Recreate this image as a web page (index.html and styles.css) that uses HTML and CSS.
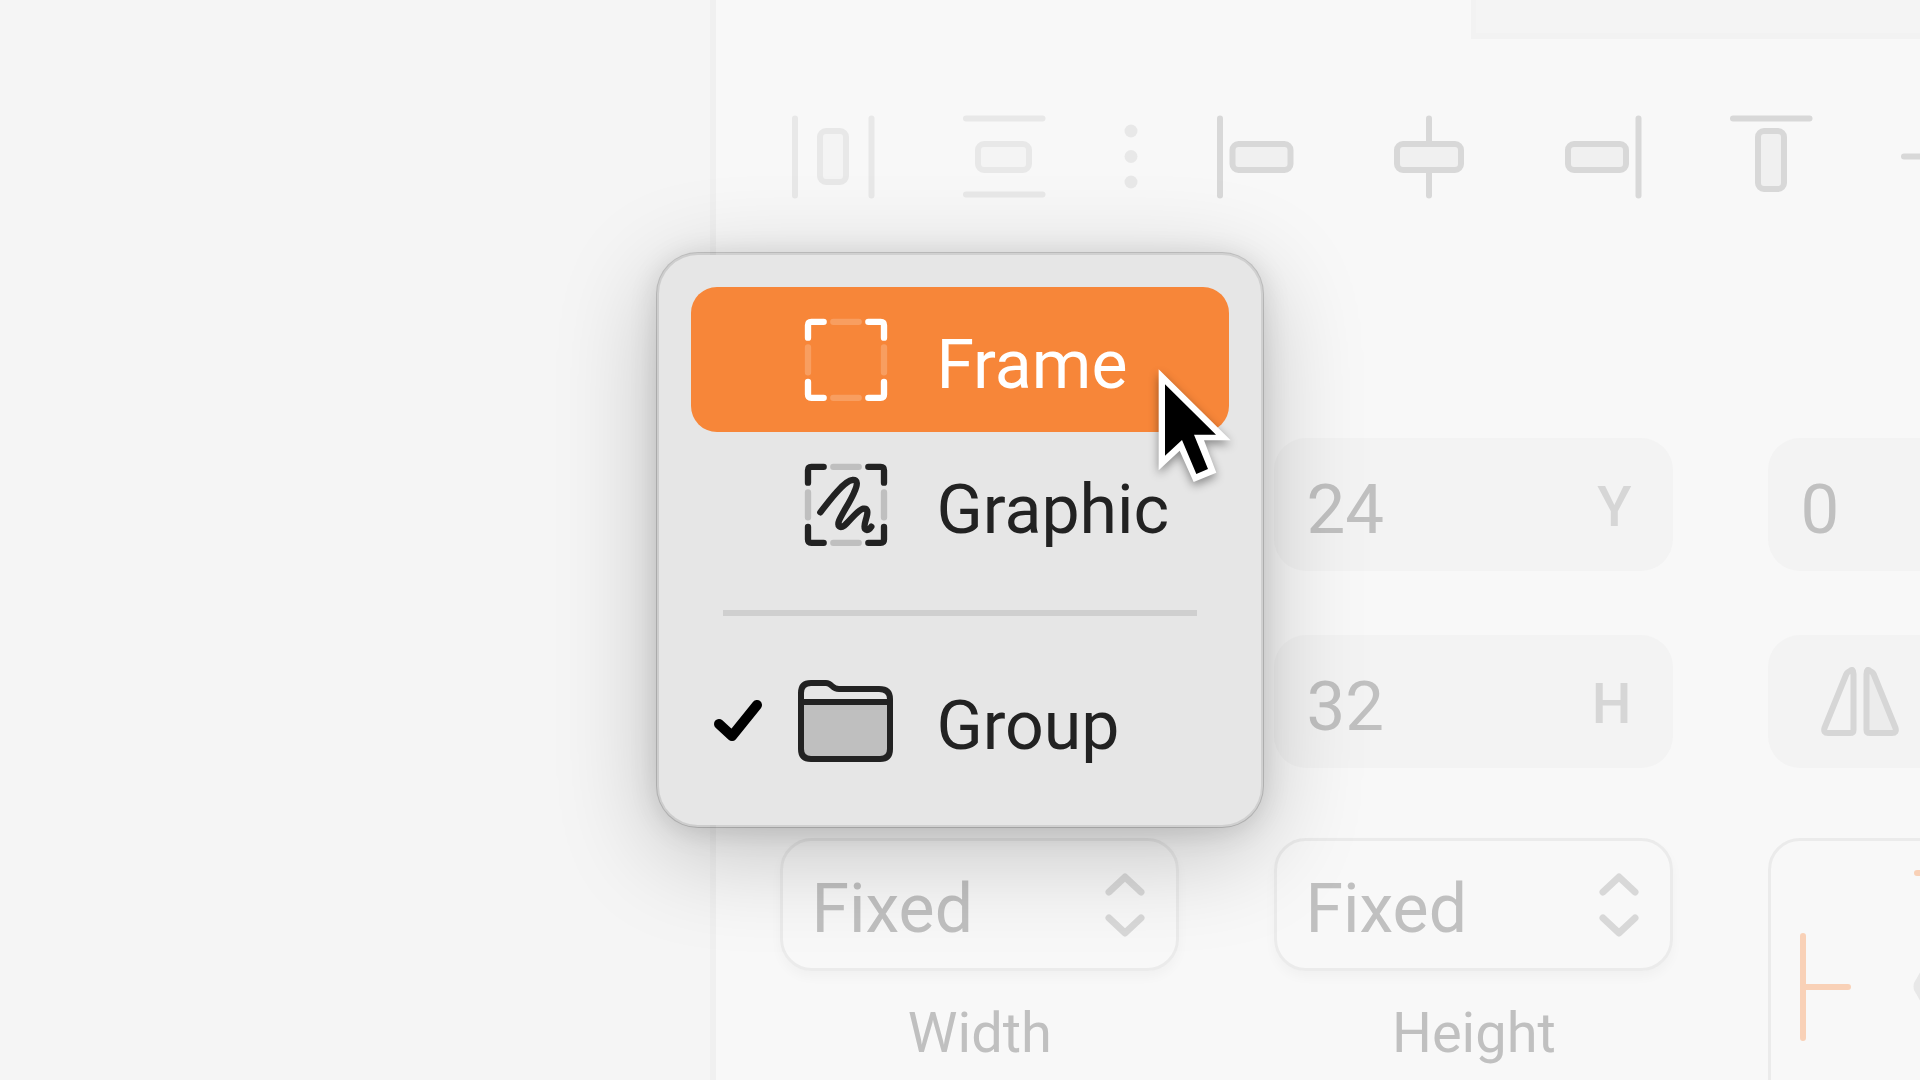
FILE: index.html
```html
<!DOCTYPE html>
<html lang="en">
<head>
<meta charset="utf-8">
<title>Inspector</title>
<link rel="stylesheet" href="styles.css">
</head>
<body>
<div class="app">
  <div class="canvas"></div>
  <main class="inspector">
    <div class="tab-strip"></div>
    <div class="toolbar">
      <div class="tool-group muted">
        <button class="tool" aria-label="Distribute horizontally">
          <svg viewBox="0 0 84 84"><path d="M4 3.500V80.500M80.500 3.500V80.500"/><rect x="29" y="16" width="26" height="51" rx="6"/></svg>
        </button>
        <button class="tool" aria-label="Distribute vertically">
          <svg viewBox="0 0 84 84"><path d="M4 3.500H80.500M4 79.500H80.500"/><rect x="16" y="29" width="51" height="26" rx="6"/></svg>
        </button>
      </div>
      <button class="tool more muted" aria-label="More">
        <svg viewBox="0 0 14 84"><circle cx="7" cy="16" r="6.500"/><circle cx="7" cy="41.500" r="6.500"/><circle cx="7" cy="67" r="6.500"/></svg>
      </button>
      <div class="tool-group">
        <button class="tool" aria-label="Align left">
          <svg viewBox="0 0 84 84"><path d="M4 3.500V80.500"/><rect x="16.500" y="29" width="58" height="26" rx="6"/></svg>
        </button>
        <button class="tool" aria-label="Align center">
          <svg viewBox="0 0 84 84"><path d="M42 3.500V80.500"/><rect x="10" y="29" width="64" height="26" rx="6"/></svg>
        </button>
        <button class="tool" aria-label="Align right">
          <svg viewBox="0 0 84 84"><path d="M80.500 3.500V80.500"/><rect x="10" y="29" width="58" height="26" rx="6"/></svg>
        </button>
        <button class="tool" aria-label="Align top">
          <svg viewBox="0 0 84 84"><path d="M4 3.500H80.500"/><rect x="29" y="16" width="26" height="58" rx="6"/></svg>
        </button>
        <button class="tool" aria-label="Align middle">
          <svg viewBox="0 0 84 84"><path d="M4 41.500H80.500"/><rect x="29" y="10" width="26" height="64" rx="6"/></svg>
        </button>
      </div>
    </div>

    <div class="fields">
      <div class="field second"><input id="y" value="24"><label for="y">Y</label></div>
      <div class="field"><input aria-label="Rotation" value="0"></div>
      <div class="field second"><input id="h" value="32"><label for="h">H</label></div>
      <button class="field flip" aria-label="Flip horizontally">
        <svg viewBox="0 0 78 70"><path d="M29 4Q32.500 1 32.500 7V63Q32.500 66 29 66H7Q2 66 3.500 61L25 8Q26 5 29 4Z"/><path class="shade" d="M49 4Q45.500 1 45.500 7V63Q45.500 66 49 66H71Q76 66 74.500 61L53 8Q52 5 49 4Z"/></svg>
      </button>
    </div>

    <div class="sizing">
      <div class="size">
        <div class="select"><select id="width"><option>Fixed</option></select>
          <svg viewBox="0 0 40 64"><path d="M4 19L20 4L36 19M4 45L20 60L36 45"/></svg></div>
        <label for="width">Width</label>
      </div>
      <div class="size">
        <div class="select"><select id="height"><option>Fixed</option></select>
          <svg viewBox="0 0 40 64"><path d="M4 19L20 4L36 19M4 45L20 60L36 45"/></svg></div>
        <label for="height">Height</label>
      </div>
      <div class="pins">
        <svg viewBox="0 0 340 340"><path class="pin" d="M3 66V168M3 117H48M117 3H222M169.500 3V48"/><path class="knob" d="M114 113L122 99Q124 97 128 97H212L226 116.500L212 136H128Q124 136 122 134L114 120Q113 116.500 114 113Z"/></svg>
      </div>
    </div>
  </main>

  <div class="menu" role="menu">
    <button class="item active" role="menuitem">
      <span class="check"></span>
      <svg class="icon" viewBox="54 35 288 288"><path d="M131 64.500H94Q84 64.500 84 74.500V112M265 64.500H302Q312 64.500 312 74.500V112M131 292.500H94Q84 292.500 84 282.500V245M265 292.500H302Q312 292.500 312 282.500V245"/><path class="faint" d="M160 64.500H236M160 292.500H236M84 141V216M312 141V216"/></svg>
      <span class="name">Frame</span>
    </button>
    <button class="item" role="menuitem">
      <span class="check"></span>
      <svg class="icon" viewBox="54 35 288 288"><path d="M131 64.500H94Q84 64.500 84 74.500V112M265 64.500H302Q312 64.500 312 74.500V112M131 292.500H94Q84 292.500 84 282.500V245M265 292.500H302Q312 292.500 312 282.500V245"/><path class="faint" d="M160 64.500H236M160 292.500H236M84 141V216M312 141V216"/><path d="M121 201C152 160 194 106 217 104C235 102 233 118 222 142C210 170 190 198 178 224C170 244 180 250 194 240C210 227 232 194 250 190C263 188 264 200 260 214C256 230 250 242 255 251C261 258 270 251 274 244"/></svg>
      <span class="name">Graphic</span>
    </button>
    <hr>
    <button class="item" role="menuitem">
      <span class="check"><svg viewBox="0 0 48 42"><path d="M5 24L18 36L43 5"/></svg></span>
      <svg class="icon folder" viewBox="0 0 96 96"><path class="fill" d="M3 29H92V77Q92 86 83 86H12Q3 86 3 77Z"/><path d="M3 20Q3 10 13 10H28Q31 10 34 13Q37 16 41 16H81Q92 16 92 26V76Q92 86 82 86H13Q3 86 3 76ZM3 29H92"/></svg>
      <span class="name">Group</span>
    </button>
    <svg class="cursor" viewBox="84 87 222 342"><path fill="#fff" d="M86 88L302 301H222L259 398L191 426L149 332L86 391Z"/><path d="M105 133L258 284H192L234 387L199 402L156 300L105 347Z"/></svg>
  </div>
</div>
</body>
</html>
```
FILE: styles.css
```css
* {
  box-sizing: border-box;
}

body {
  margin: 0;
  overflow: hidden;
  background: #f8f8f8;
  color: #c0c0c0;
  font-family: Roboto, "Liberation Sans", sans-serif;
}

button,
input,
select {
  margin: 0;
  padding: 0;
  border: 0;
  background: none;
  color: inherit;
  font: inherit;
  appearance: none;
}

svg {
  display: block;
  fill: none;
  stroke: currentColor;
  stroke-linecap: round;
  stroke-linejoin: round;
}

.app {
  position: relative;
  display: flex;
  height: 100vh;
}

.canvas {
  flex: 0 0 37%;
  background: #f5f5f5;
}

.inspector {
  flex: 1;
  min-width: 0;
  overflow: hidden;
  border-left: 6px solid #f0f0f0;
}

.tab-strip {
  height: 39px;
  margin-left: 755px;
  background: #f4f4f4;
  border: solid #f2f2f2;
  border-width: 0 0 6px 5px;
}

.toolbar {
  display: flex;
  padding: 76px 0 0 75px;
  color: #d8d8d8;
}

.tool-group {
  display: flex;
  gap: 87px;
}

.tool {
  flex: none;
  width: 84px;
  height: 84px;
  stroke-width: 6px;
}

.tool rect {
  fill: #f0f0f0;
}

.muted {
  color: #e8e8e8;
}

.muted rect {
  fill: #f4f4f4;
}

.more {
  width: 14px;
  margin: 0 78px;
}

.more circle {
  fill: currentColor;
  stroke: none;
}

.fields,
.sizing {
  display: grid;
  grid-template-columns: repeat(3, 399px);
  column-gap: 95px;
  padding-left: 64px;
}

.fields {
  row-gap: 64px;
  margin-top: 239px;
}

.second {
  grid-column: 2;
}

.field {
  display: flex;
  align-items: center;
  justify-content: space-between;
  height: 133px;
  padding: 0 42px 0 32px;
  border-radius: 32px;
  background: #f3f3f3;
  font-size: 69px;
}

.field input {
  width: 200px;
  height: 100px;
  padding-top: 10px;
}

.field label {
  padding-top: 4px;
  color: #d6d6d6;
  font-size: 56px;
  font-weight: 500;
}

.flip {
  padding-left: 53px;
  color: #d6d6d6;
}

.flip svg {
  width: 78px;
  height: 70px;
  stroke-width: 6px;
}

.shade {
  fill: #ececec;
}

.sizing {
  margin-top: 70px;
}

.size {
  text-align: center;
  font-size: 56px;
  line-height: 72px;
}

.select {
  display: grid;
  align-items: center;
  height: 133px;
  margin-bottom: 26px;
  border: 3px solid #ebebeb;
  border-radius: 32px;
  box-shadow: 0 6px 12px rgba(0, 0, 0, 0.03);
  font-size: 68px;
}

.select > * {
  grid-area: 1 / 1;
}

.select select {
  height: 100%;
  padding: 8px 0 0 28px;
}

.select svg {
  justify-self: end;
  width: 40px;
  height: 64px;
  margin-right: 31px;
  color: #d8d8d8;
  stroke-width: 7px;
  pointer-events: none;
}

.pins {
  height: 399px;
  padding: 29px;
  border: 3px solid #ebebeb;
  border-radius: 32px;
}

.pins svg {
  width: 340px;
  height: 340px;
}

.pin {
  stroke: #f9d1b7;
  stroke-width: 6px;
}

.knob {
  fill: #e8e8e8;
  stroke: none;
}

.menu {
  position: absolute;
  top: 252px;
  left: calc(37% - 54px);
  width: 608px;
  padding: 32px;
  border: 3px solid rgba(0, 0, 0, 0.16);
  border-radius: 42px;
  background: #e6e6e6;
  background-clip: padding-box;
  box-shadow: 0 24px 100px rgba(0, 0, 0, 0.22), 0 4px 28px rgba(0, 0, 0, 0.12);
  color: #222;
  font-size: 68px;
}

.item {
  display: flex;
  align-items: center;
  width: 100%;
  height: 145px;
  padding-left: 23px;
  border-radius: 26px;
  text-align: left;
}

.item.active {
  background: #f78639;
  color: #fff;
}

.name {
  padding-top: 10px;
}

.check {
  width: 48px;
  margin-right: 36px;
  color: #000;
  stroke-width: 10px;
}

.icon {
  width: 96px;
  height: 96px;
  margin-right: 42px;
  stroke-width: 19px;
}

.faint {
  opacity: 0.2;
}

.folder {
  stroke-width: 6px;
}

.folder .fill {
  fill: #bfbfbf;
  stroke: none;
}

.menu hr {
  height: 6px;
  margin: 33px 32px 32px;
  border: 0;
  background: #cfcfcf;
}

.cursor {
  position: absolute;
  top: 114px;
  left: 499px;
  width: 74px;
  height: 114px;
  overflow: visible;
  fill: #000;
  stroke: none;
  filter: drop-shadow(0 4px 5px rgba(0, 0, 0, 0.4));
}
```
